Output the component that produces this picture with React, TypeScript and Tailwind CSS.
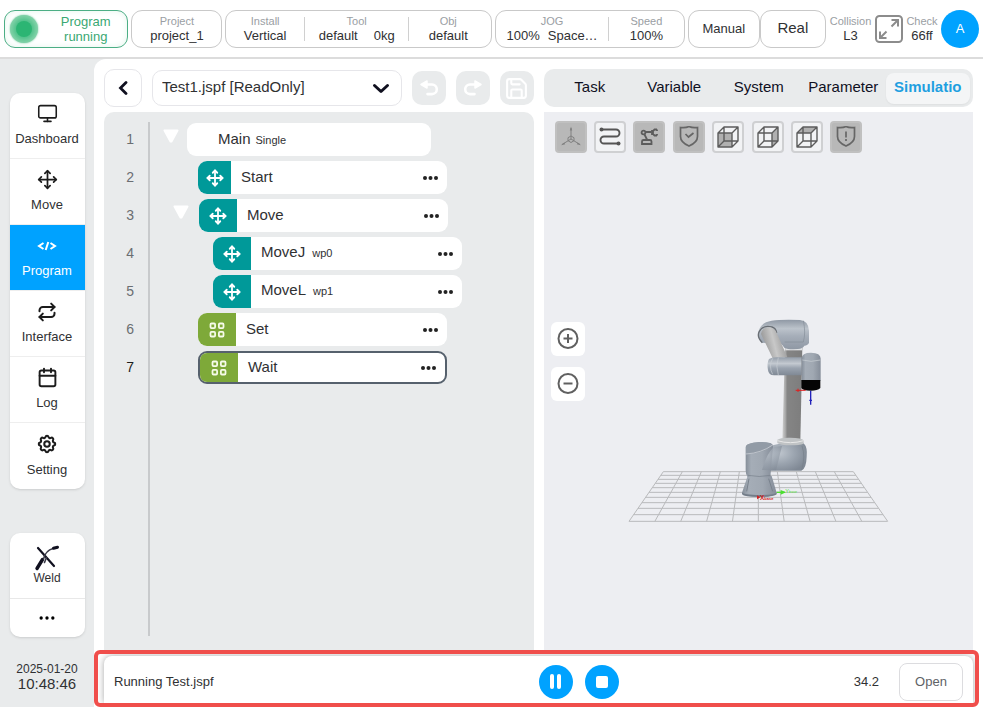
import React from 'react';
import { useState } from 'react';
import { Calendar, Ellipsis, Monitor, Move, Repeat, Save } from 'lucide-react';
import { TbSettings } from 'react-icons/tb';
import clsx from 'clsx';

const CodeIcon = () => (
  <svg width="20" height="20" viewBox="0 0 20 20" fill="none" stroke="currentColor" strokeWidth="2">
    <path d="M6.5 7 2 10l4.5 3M13.5 7 18 10l-4.5 3M11.3 6 8.7 14" />
  </svg>
);

const WeldIcon = () => (
  <svg width="26" height="26" viewBox="0 0 26 26" fill="none" stroke="#10101f" strokeLinecap="round">
    <path d="M4 3 20 21" strokeWidth="2.2" />
    <path d="M3 23.5 8.5 14.5" strokeWidth="3.4" />
    <path d="M9.5 14C11 8 15 4.5 19 3.5" strokeWidth="1.5" stroke="#3a3a48" />
    <path d="M19.5 3.3 23.5 2.2" strokeWidth="3" />
    <path d="M10.5 17.5 12.5 12.5" strokeWidth="1.6" stroke="#3a3a48" />
  </svg>
);

const UndoIcon = ({ flip = false }: { flip?: boolean }) => (
  <svg width="20" height="20" viewBox="0 0 20 20" className={clsx(flip && '-scale-x-100')}>
    <path d="M2 6.5 8 3v7z" fill="#fff" stroke="#fff" strokeWidth="1.5" strokeLinejoin="round" />
    <path d="M7 6.5h6a4.8 4.8 0 0 1 0 9.6H8.5" fill="none" stroke="#fff" strokeWidth="2.6" strokeLinecap="round" />
  </svg>
);

const BlocksIcon = () => (
  <svg width="16" height="16" viewBox="0 0 16 16" fill="none" stroke="#f6fbe9" strokeWidth="1.8">
    <rect x="1.5" y="1.5" width="4.6" height="4.6" rx="1" />
    <rect x="9.9" y="1.5" width="4.6" height="4.6" rx="1" />
    <rect x="1.5" y="9.9" width="4.6" height="4.6" rx="1" />
    <rect x="9.9" y="9.9" width="4.6" height="4.6" rx="1" />
  </svg>
);

const FullscreenIcon = () => (
  <svg width="28" height="28" viewBox="0 0 28 28" fill="none" stroke="#8c8c8c" strokeWidth="2">
    <rect x="1" y="1" width="26" height="26" rx="3.5" />
    <path d="M16.5 11.5l6-6M16.5 5H23v6.5M11.5 16.5l-6 6M5 16.5V23h6.5" />
  </svg>
);

const Triangle = () => (
  <svg width="16" height="14" viewBox="0 0 16 14" fill="#fff" stroke="#fff" strokeWidth="2" strokeLinejoin="round">
    <path d="M1.5 1.5h13L8.5 12.5h-1z" />
  </svg>
);

const AxesIcon = () => (
  <svg width="22" height="22" viewBox="0 0 22 22" fill="none" stroke="#808080" strokeWidth="1">
    <path d="M11 13V2M11 13 2 18.5M11 13l9 5.5" />
    <path d="M11 10l3 1.7v3L11 16.5l-3-1.8v-3z" />
    <path d="M11 .5 12.2 4.5H9.8zM1 19.2l3.2-2.7 1 1.7zM21 19.2l-3.2-2.7-1 1.7z" fill="#808080" stroke="none" />
  </svg>
);

const PathIcon = () => (
  <svg width="22" height="22" viewBox="0 0 22 22" fill="none" stroke="#555" strokeWidth="1.9">
    <path d="M2 3.5h15a3.5 3.5 0 0 1 0 7H5a3.5 3.5 0 0 0 0 7h15" />
    <circle cx="2.5" cy="3.5" r="2" fill="#555" stroke="none" />
    <circle cx="19.5" cy="17.5" r="2" fill="#555" stroke="none" />
  </svg>
);

const ArmIcon = () => (
  <svg width="20" height="20" viewBox="0 0 20 20" fill="none" stroke="#5c5c5c" strokeWidth="1.8">
    <circle cx="4.5" cy="5.5" r="1.9" />
    <path d="M6.5 5h6M5.5 7.5 8 12.5M3 17v-2.5Q3 13 4.500 13H11q1.5 0 1.5 1.500V17z" />
    <path d="M13 3v5M18 2.500h-2.500L14 4v3l1.500 1.500H18M18 2.500V4M18 8.500V7" />
  </svg>
);

const ShieldIcon = ({ alert = false }: { alert?: boolean }) => (
  <svg width="22" height="22" viewBox="0 0 22 22" fill="none" stroke="#666" strokeWidth="1.7">
    <path d="M11 .5Q8 2 2.5 1.5v9q0 6 8.5 9.5 8.5-3.500 8.5-9.5v-9Q14 2 11 .5z" />
    {alert ? <path d="M11 5.5v6M11 13v2" /> : <path d="M7.5 8l3 3 5-4" />}
  </svg>
);

const faces = {
  front: 'M1 7h14v14H1z',
  right: 'M15 7l6-6v14l-6 6z',
  top: 'M1 7l6-6h14l-6 6z',
};

const CubeIcon = ({ face }: { face: keyof typeof faces }) => (
  <svg width="22" height="22" viewBox="0 0 22 22" fill="none" stroke="#5c5c5c" strokeWidth="1.4" strokeLinejoin="round">
    <path d={faces[face]} fill="#b0b0b0" stroke="none" />
    <path d="M1 7h14v14H1zM7 1h14v14H7zM1 7l6-6M15 7l6-6M15 21l6-6M1 21l6-6" />
  </svg>
);

const gridColumns = Array.from({ length: 11 }, (_, i) => ({ top: 130 + i * 57, bottom: 27 + i * 77.6 }));
const gridRows = [485, 496, 508, 520, 533, 547, 562, 578, 595, 614, 634];

const RobotScene = () => (
  <svg width="280" height="220" viewBox="0 0 840 660">
    <defs>
      <linearGradient id="body" x1="0" x2="1">
        <stop offset="0" stopColor="#858e99" />
        <stop offset=".2" stopColor="#a5adb7" />
        <stop offset=".6" stopColor="#a0a8b2" />
        <stop offset="1" stopColor="#858d99" />
      </linearGradient>
      <linearGradient id="bodyDown" x1="0" x2="0" y1="0" y2="1">
        <stop offset="0" stopColor="#949da9" />
        <stop offset=".35" stopColor="#c3c9d0" />
        <stop offset=".6" stopColor="#9aa3af" />
        <stop offset="1" stopColor="#7f8894" />
      </linearGradient>
      <linearGradient id="elbow" x1="0" x2="0" y1="0" y2="1">
        <stop offset="0" stopColor="#8f98a4" />
        <stop offset=".3" stopColor="#bcc3cb" />
        <stop offset=".55" stopColor="#a6aeb9" />
        <stop offset="1" stopColor="#8f98a4" />
      </linearGradient>
      <linearGradient id="tube" x1="0" x2="1">
        <stop offset="0" stopColor="#d0d0d0" />
        <stop offset=".16" stopColor="#a6a6a6" />
        <stop offset=".24" stopColor="#858585" />
        <stop offset="1" stopColor="#7d7d7d" />
      </linearGradient>
      <linearGradient id="forearm" x1="0" x2="1" y1=".3" y2="0">
        <stop offset="0" stopColor="#999" />
        <stop offset=".4" stopColor="#c8c8c8" />
        <stop offset="1" stopColor="#858585" />
      </linearGradient>
      <radialGradient id="shoulder" cx=".3" cy=".35" r=".75">
        <stop offset="0" stopColor="#c0c7cf" />
        <stop offset=".5" stopColor="#9da6b1" />
        <stop offset="1" stopColor="#7f8894" />
      </radialGradient>
    </defs>

    <g stroke="#b9babc" strokeWidth="3">
      {gridRows.map((y) => {
        const spread = ((y - 485) * 103) / 149;
        return <path key={y} d={`M${130 - spread} ${y}H${700 + spread}`} />;
      })}
      {gridColumns.map((c) => (
        <path key={c.top} d={`M${c.top} 485L${c.bottom} 634`} />
      ))}
    </g>

    {/* Base */}
    <path d="M383 498h72l15 50q-2 12-50 12t-54-12z" fill="url(#body)" />
    <path d="M366 547q4 8 54 8t50-8v6q-6 8-52 8t-52-8z" fill="#737d89" />
    <path d="M387 506l-7 38M446 506l12 38" stroke="#79828d" strokeWidth="3" />
    <path d="M440 412q20-8 46-12h65q12 12 9 40-1 36-16 42h-100z" fill="url(#shoulder)" />
    <path d="M377 412q0-10 20-13 30-5 54 0 8 3 8 10l-8 92q-34 7-68 0-6-6-6-20z" fill="url(#body)" />
    <path d="M458 406q-26 24-80 26v-22q6-12 38-14 36-1 42 10z" fill="#929ba6" />
    <path d="M378 432q46-3 80-27" fill="none" stroke="#d3d7dc" strokeWidth="2" />
    <path d="M426 480q14-50 36-70l24-2-18 73z" fill="url(#shoulder)" opacity=".6" />
    <path d="M384 496q34 7 68 0M546 408q11 30-1 72" fill="none" stroke="#757e89" strokeWidth="2" />

    {/* Upper arm */}
    <path d="M495 112h52l-6 282h-54z" fill="url(#tube)" />
    <path d="M472 389q10-7 39-6 35 0 40 8v10q-12 5-40 5-30 0-39-7z" fill="#c0c3c5" />
    <path d="M472 392q39 12 79 0" fill="none" stroke="#e8e8e8" strokeWidth="3" />
    <path d="M496 111h50v10h-50z" fill="#e0e2e4" />

    {/* Elbow */}
    <path d="M415 66q5-28 40-34 30-4 85-2 25 2 27 32v36q-3 8-14 9-4 9-20 10-28 2-40-4-6-9-10-12l-57-3q-13-10-11-32z" fill="url(#elbow)" />
    <path d="M550 32q8 36 0 64h-56" fill="none" stroke="#858e99" strokeWidth="2" />
    <path d="M427 98q-18-18-9-34 12-20 38-13 12 4 14 18" fill="none" stroke="#696e74" strokeWidth="4" />
    <path d="M423 72q2-20 27-20 15 3 20 17l32 72-44 4z" fill="url(#forearm)" />

    {/* Wrist and tool */}
    <path d="M447 147q10-7 32-5h66v54h-83q-16 0-18-15-4-22 3-34z" fill="url(#bodyDown)" />
    <path d="M475 143q-9 25 0 52M458 145q-13 24 0 48" fill="none" stroke="#c9ced4" strokeWidth="2" />
    <path d="M545 145q0-17 28-17 29 0 29 18v66h-57z" fill="url(#body)" />
    <path d="M547 150q26 8 54 0" fill="none" stroke="#ccd1d6" strokeWidth="2" />
    <path d="M544 210h57v24q-8 8-29 8-23 0-28-8z" fill="#050505" />
    <path d="M527 241h30M534 236v10" stroke="#e02020" strokeWidth="3" />
    <path d="M572 242v42M568 271h8" stroke="#2222bb" strokeWidth="4" />

    {/* Base frame axes */}
    <path d="M470 547h24" stroke="#4be02f" strokeWidth="4" />
    <path d="M482 540l16 7-16 7z" fill="#4be02f" />
    <text x="496" y="548" fill="#4be02f" fontSize="17">
      Y<tspan fontSize="11">base</tspan>
    </text>
    <path d="M411 556l10 6-10 6z" fill="#d32020" />
    <text x="420" y="569" fill="#d32020" fontSize="19" fontWeight="700">
      X<tspan fontSize="12">base</tspan>
    </text>
  </svg>
);

const navItems = [
  { label: 'Dashboard', icon: <Monitor size={21} strokeWidth={1.8} /> },
  { label: 'Move', icon: <Move size={21} /> },
  { label: 'Program', icon: <CodeIcon /> },
  { label: 'Interface', icon: <Repeat size={20} strokeWidth={2.4} /> },
  { label: 'Log', icon: <Calendar size={21} strokeWidth={2.2} /> },
  { label: 'Setting', icon: <TbSettings size={22} strokeWidth={2.2} /> },
];

const steps = [
  { label: 'Start', note: '', kind: 'move', indent: 'ml-12', iconWidth: 'w-[33px]' },
  { label: 'Move', note: '', kind: 'move', indent: 'ml-[23px]', iconWidth: 'w-[38px]', open: true },
  { label: 'MoveJ', note: 'wp0', kind: 'move', indent: 'ml-[63px]', iconWidth: 'w-[38px]' },
  { label: 'MoveL', note: 'wp1', kind: 'move', indent: 'ml-[63px]', iconWidth: 'w-[38px]' },
  { label: 'Set', note: '', kind: 'block', indent: 'ml-12', iconWidth: 'w-[38px]' },
  { label: 'Wait', note: '', kind: 'block', indent: 'ml-12', iconWidth: 'w-[38px]', selected: true },
];

const tabs = ['Task', 'Variable', 'System', 'Parameter', 'Simulatio'];

const viewTools = [
  { label: 'Axes', icon: <AxesIcon />, on: true },
  { label: 'Trajectory', icon: <PathIcon />, on: false },
  { label: 'Robot', icon: <ArmIcon />, on: true },
  { label: 'Safety', icon: <ShieldIcon />, on: true },
  { label: 'Front view', icon: <CubeIcon face="front" />, on: false },
  { label: 'Right view', icon: <CubeIcon face="right" />, on: false },
  { label: 'Top view', icon: <CubeIcon face="top" />, on: false },
  { label: 'Warnings', icon: <ShieldIcon alert />, on: true },
];

const Stat = ({ label, children, className }: { label: string; children: React.ReactNode; className?: string }) => (
  <div className={clsx('flex flex-col items-center justify-center whitespace-nowrap', className)}>
    <span className="text-[11px] leading-[14px] text-[#9a9ea3]">{label}</span>
    <span className="flex text-[13px] leading-[15px] text-[#303133]">{children}</span>
  </div>
);

const Divider = () => <div className="h-6 w-px self-center bg-[#d0d0d0]" />;

const Header = () => (
  <header className="flex h-[59px] items-center gap-[3px] border-b-2 border-[#dcdcdc] bg-white px-1">
    <div className="flex h-[38px] flex-[124] items-center rounded-[11px] border border-[#4cae85] shadow-[inset_0_0_6px_#e3f5ec]">
      <div className="ml-[5px] flex size-7 shrink-0 items-center justify-center rounded-full bg-[#86d3ab] shadow-[0_0_2px_#86d3ab]">
        <div className="size-4 rounded-full bg-[#2cb573] shadow-[0_0_5px_3px_#4cc088]" />
      </div>
      <span className="flex-1 pl-1.5 text-center text-[13px] leading-[15px] text-[#3aa873]">
        Program
        <br />
        running
      </span>
    </div>
    <div className="flex h-[38px] flex-[90] justify-center rounded-[11px] border border-[#c9c9c9]">
      <Stat label="Project">project_1</Stat>
    </div>
    <div className="flex h-[38px] flex-[268] rounded-[11px] border border-[#c9c9c9]">
      <Stat label="Install" className="flex-[78]">Vertical</Stat>
      <Divider />
      <Stat label="Tool" className="flex-[104]">
        <span className="mr-4">default</span>
        <span>0kg</span>
      </Stat>
      <Divider />
      <Stat label="Obj" className="mr-1 flex-[78]">default</Stat>
    </div>
    <div className="flex h-[38px] flex-[190] rounded-[11px] border border-[#c9c9c9]">
      <Stat label="JOG" className="flex-[114]">
        <span className="mr-2">100%</span>
        <span>Space…</span>
      </Stat>
      <Divider />
      <Stat label="Speed" className="flex-[76]">100%</Stat>
    </div>
    <div className="flex h-[38px] flex-[140] text-[#303133]">
      <button className="flex-[73] rounded-[11px] border border-[#c9c9c9] text-[13px]">Manual</button>
      <button className="flex-[67] rounded-[11px] border border-[#c9c9c9] text-[15px]">Real</button>
    </div>
    <div className="flex h-[38px] items-center gap-[3px]">
      <Stat label="Collision" className="w-[43px]">L3</Stat>
      <button aria-label="Fullscreen">
        <FullscreenIcon />
      </button>
      <Stat label="Check" className="w-8">66ff</Stat>
      <button className="size-[38px] rounded-full bg-[#00a2ff] text-[13px] text-white">A</button>
    </div>
  </header>
);

const Sidebar = () => (
  <aside className="flex w-[94px] shrink-0 flex-col items-center bg-[#e9ebec] pt-[34px]">
    <nav className="w-[75px] divide-y divide-[#eeeeee] overflow-hidden rounded-[10px] bg-white shadow-sm">
      {navItems.map((item) => (
        <button
          key={item.label}
          className={clsx(
            'flex h-[66px] w-full flex-col items-center justify-between pt-2.5 pb-[11px]',
            item.label === 'Program' ? 'bg-[#00a2ff] text-white' : 'text-[#1c1c1c]'
          )}
        >
          <span className="flex h-[21px] items-center">{item.icon}</span>
          <span className={clsx('text-[13px] leading-4', item.label !== 'Program' && 'text-[#303133]')}>{item.label}</span>
        </button>
      ))}
    </nav>
    <div className="mt-11 w-[75px] divide-y divide-[#e8e8e8] rounded-[10px] bg-white shadow-sm">
      <button className="flex h-[66px] w-full flex-col items-center pt-3 text-[#303133]">
        <WeldIcon />
        <span className="text-xs leading-[14px]">Weld</span>
      </button>
      <button aria-label="More" className="flex h-[38px] w-full items-center justify-center text-black">
        <Ellipsis size={20} fill="currentColor" />
      </button>
    </div>
    <div className="mt-[25px] text-center text-[#303133]">
      <div className="text-xs leading-[14px]">2025-01-20</div>
      <div className="text-[15px] leading-[15px]">10:48:46</div>
    </div>
  </aside>
);

const toolButton = 'flex size-[34px] items-center justify-center rounded-[10px] bg-[#e9ebec]';

const ProgramPanel = () => (
  <section className="flex min-w-0 flex-1 flex-col gap-[5px]">
    <div className="flex h-[38px] items-center gap-2.5">
      <button aria-label="Back" className="flex size-[38px] items-center justify-center rounded-[10px] border border-[#e6e6ea]">
        <svg width="10" height="14" viewBox="0 0 10 14" fill="none" stroke="#10101f" strokeWidth="2.8" strokeLinecap="round">
          <path d="M8 1.5 2.5 7 8 12.5" />
        </svg>
      </button>
      <div className="relative flex-1">
        <select
          aria-label="Program file"
          className="h-9 w-full appearance-none rounded-[10px] border border-[#e6e6ea] bg-white pr-8 pb-0.5 pl-[9px] text-[15px] text-[#303133]"
        >
          <option>Test1.jspf [ReadOnly]</option>
        </select>
        <svg
          width="18"
          height="12"
          viewBox="0 0 18 12"
          fill="none"
          stroke="#10101f"
          strokeWidth="3"
          strokeLinecap="round"
          strokeLinejoin="round"
          className="pointer-events-none absolute top-[13px] right-3"
        >
          <path d="M2.5 2.5 9 8.5 15.5 2.5" />
        </svg>
      </div>
      <button aria-label="Undo" className={toolButton}>
        <UndoIcon />
      </button>
      <button aria-label="Redo" className={toolButton}>
        <UndoIcon flip />
      </button>
      <button aria-label="Save" className={toolButton}>
        <Save size={25} strokeWidth={2} color="#fff" />
      </button>
    </div>

    <div className="flex flex-1 rounded-t-[10px] bg-[#e9ebec] pt-2.5 pb-3.5">
      <ol className="flex w-11 flex-col gap-[5px] pt-px pr-3.5 text-right text-sm text-[#6b6e72]">
        {[1, 2, 3, 4, 5, 6, 7].map((n) => (
          <li key={n} className={clsx('h-[33px] leading-[33px]', n === 7 && 'text-[#1c1c1c]')}>
            {n}
          </li>
        ))}
      </ol>
      <div className="flex flex-1 flex-col gap-[5px] border-l-2 border-[#c8cacc] pt-px text-[15px] text-[#303133]">
        <div className="flex h-[33px] items-center">
          <button aria-label="Collapse Main" className="mr-2 ml-[13px] pb-2">
            <Triangle />
          </button>
          <div className="flex h-full w-[244px] items-baseline rounded-[9px] bg-white pl-[31px] leading-[31px]">
            Main<span className="ml-[5px] text-[11px]">Single</span>
          </div>
        </div>
        {steps.map((step) => (
          <div key={step.label} className={clsx('flex h-[33px] items-center', step.indent)}>
            {step.open && (
              <button aria-label="Collapse Move" className="mr-2.5 pb-2">
                <Triangle />
              </button>
            )}
            <div
              className={clsx(
                'flex h-full w-[249px] items-center overflow-hidden rounded-[9px] bg-white',
                step.selected && 'border-2 border-[#56616d]'
              )}
            >
              <div
                className={clsx(
                  'flex h-full items-center justify-center',
                  step.iconWidth,
                  step.kind === 'move' ? 'bg-[#009999] text-white' : 'bg-[#7ea939]'
                )}
              >
                {step.kind === 'move' ? <Move size={18} strokeWidth={2.4} /> : <BlocksIcon />}
              </div>
              <div className="flex flex-1 items-baseline pb-0.5 pl-2.5 leading-[27px]">
                {step.label}
                {step.note && <span className="ml-[7px] text-[11px]">{step.note}</span>}
              </div>
              <button aria-label={`${step.label} options`} className="pr-2">
                <svg width="18" height="6" viewBox="0 0 18 6" fill="#222">
                  <circle cx="4" cy="3" r="2" />
                  <circle cx="9.5" cy="3" r="2" />
                  <circle cx="15" cy="3" r="2" />
                </svg>
              </button>
            </div>
          </div>
        ))}
      </div>
    </div>
  </section>
);

const SimulationPanel = () => {
  const [activeTab, setActiveTab] = useState('Simulatio');

  return (
    <section className="flex min-w-0 flex-1 flex-col gap-[5px]">
      <div className="grid h-[38px] grid-cols-5 rounded-[10px] bg-[#e9ebec] pt-1 pr-[3px] pb-[3px] pl-1">
        {tabs.map((tab) => (
          <button
            key={tab}
            onClick={() => setActiveTab(tab)}
            className={clsx(
              'rounded-lg pb-0.5 text-[15px]',
              tab === activeTab ? 'bg-[#f4f5f6] font-bold text-[#1f9fe0] shadow-xs' : 'text-[#10101f]'
            )}
          >
            {tab}
          </button>
        ))}
      </div>
      <div className="flex flex-1 flex-col bg-[#edeef2] pt-[9px]">
        <div className="ml-[11px] flex w-[308px] justify-between">
          {viewTools.map((tool) => (
            <button
              key={tool.label}
              aria-label={tool.label}
              className={clsx(
                'flex size-8 items-center justify-center rounded border-2',
                tool.on ? 'border-[#c0c0c0] bg-[#b8b8b8]' : 'border-[#cfd0d2] bg-[#f2f3f5]'
              )}
            >
              {tool.icon}
            </button>
          ))}
        </div>
        <div className="relative flex flex-1 items-center justify-center pt-9 pl-[3px]">
          <RobotScene />
          {/* View zoom, floats over the canvas */}
          <div className="absolute top-[169px] left-[7px] flex flex-col gap-[11px]">
            {['Zoom in', 'Zoom out'].map((label) => (
              <button key={label} aria-label={label} className="flex size-[34px] items-center justify-center rounded-md bg-white">
                <svg width="22" height="22" viewBox="0 0 22 22" fill="none" stroke="#606060" strokeWidth="2">
                  <circle cx="11" cy="10.5" r="9.5" />
                  <path d={label === 'Zoom in' ? 'M6.5 10.5h9M11 6v9' : 'M6.5 10.5h9'} />
                </svg>
              </button>
            ))}
          </div>
        </div>
      </div>
    </section>
  );
};

const RunBar = () => (
  <footer className="mr-1 h-[57px] overflow-hidden rounded-md border-4 border-[#f04e4b] pt-0.5 pr-0.5 pl-1.5">
    <div className="grid h-[47px] grid-cols-2 items-center rounded-t-lg bg-white pt-1 text-[13px] text-[#303133] shadow-[0_0_7px_rgba(0,0,0,0.35)]">
      <span className="pl-2.5">Running Test.jspf</span>
      <div className="flex items-center pr-2.5">
        <button aria-label="Pause" className="flex size-[34px] items-center justify-center gap-[3px] rounded-full bg-[#00a2ff]">
          <span className="h-[15px] w-1 rounded-sm bg-white" />
          <span className="h-[15px] w-1 rounded-sm bg-white" />
        </button>
        <button aria-label="Stop" className="ml-3 flex size-[34px] items-center justify-center rounded-full bg-[#00a2ff]">
          <span className="size-3 rounded-xs bg-white" />
        </button>
        <span className="ml-auto">34.2</span>
        <button className="ml-5 h-[38px] w-16 rounded-lg border border-[#dcdcdf] text-[#606266]">Open</button>
      </div>
    </div>
  </footer>
);

const App = () => (
  <div className="flex min-h-screen flex-col bg-[#e9ebec] font-['Liberation_Sans',Arial,sans-serif]">
    <Header />
    <div className="flex flex-1">
      <Sidebar />
      <main className="flex min-w-0 flex-1 flex-col rounded-tl-xl bg-white">
        <div className="flex flex-1 gap-2.5 px-2.5 pt-2.5">
          <ProgramPanel />
          <SimulationPanel />
        </div>
        <RunBar />
      </main>
    </div>
  </div>
);

export default App;
